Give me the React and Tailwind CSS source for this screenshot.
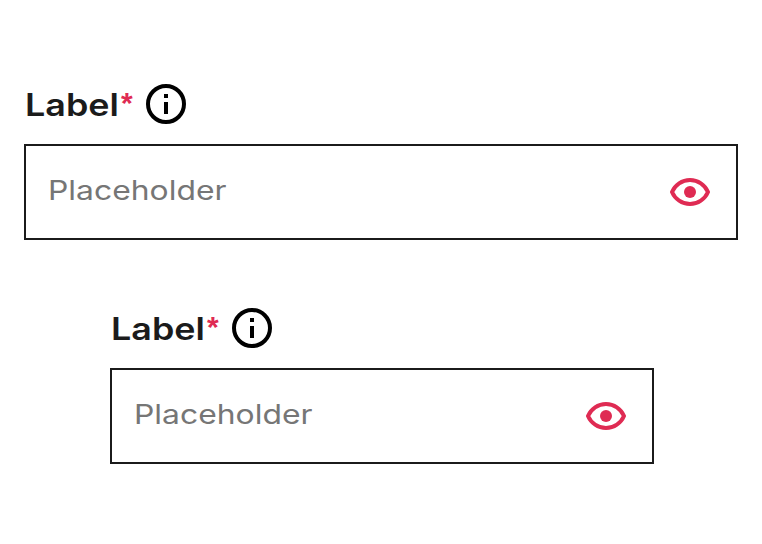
function InfoIcon() {
  return (
    <svg className="w-10 h-10 flex-shrink-0" viewBox="0 0 40 40" fill="none">
      <circle cx="20" cy="20" r="18" stroke="#000" strokeWidth="4" />
      <path d="M18 10h4v4h-4zM18 18h4v12h-4z" fill="#000" />
    </svg>
  );
}

function EyeIcon() {
  return (
    <svg className="w-10 h-7 flex-shrink-0" viewBox="0 0 40 28" fill="none">
      <path
        d="M2 14C5 7 12 2 20 2s15 5 18 12c-3 7-10 12-18 12S5 21 2 14z"
        stroke="#df2b53"
        strokeWidth="4"
        strokeLinejoin="round"
      />
      <circle cx="20" cy="14" r="6" fill="#df2b53" />
    </svg>
  );
}

function PasswordField({ className }) {
  return (
    <div className={className}>
      {/* Label row */}
      <div className="flex items-center h-10">
        <div className="w-[122px] flex-shrink-0 flex text-[#1b1b1b]">
          <span className="w-24 flex-shrink-0 pl-px pt-0.5">
            <span className="inline-block origin-left scale-x-[1.14] text-[31.5px] leading-10 font-semibold">
              Label
            </span>
          </span>
          <span className="pl-px font-['Liberation_Sans',sans-serif] text-[30px] leading-10 font-bold text-[#df2b53]">
            *
          </span>
        </div>
        <InfoIcon />
      </div>

      {/* Input */}
      <div className="mt-5 h-24 flex items-center justify-between border-2 border-[#1b1b1b] pl-[22px] pr-[26px]">
        <span className="inline-block origin-left scale-x-[1.18] pb-[3px] text-[27px] leading-10 text-[#767676]">
          Placeholder
        </span>
        <EyeIcon />
      </div>
    </div>
  );
}

export default function App() {
  return (
    <div className="h-screen bg-white pt-21 font-['Inter',sans-serif] antialiased overflow-hidden">
      <PasswordField className="ml-6 w-[714px]" />
      <PasswordField className="ml-[110px] mt-17 w-[544px]" />
    </div>
  );
}
